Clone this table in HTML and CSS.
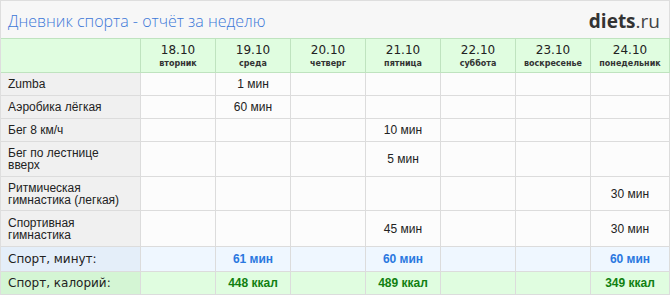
FILE: index.html
```html
<!DOCTYPE html>
<html lang="ru">
<head>
<meta charset="utf-8">
<title>Дневник спорта</title>
<link rel="stylesheet" href="styles.css">
</head>
<body>
<div class="report">
  <div class="topbar">
    <h1 class="title">Дневник спорта - отчёт за неделю</h1>
    <div class="logo"><b>diets</b>.ru</div>
  </div>
  <div class="grid">
    <div class="c hd first"></div>
    <div class="c hd"><span class="date">18.10</span><span class="wd">вторник</span></div>
    <div class="c hd"><span class="date">19.10</span><span class="wd">среда</span></div>
    <div class="c hd"><span class="date">20.10</span><span class="wd">четверг</span></div>
    <div class="c hd"><span class="date">21.10</span><span class="wd">пятница</span></div>
    <div class="c hd"><span class="date">22.10</span><span class="wd">суббота</span></div>
    <div class="c hd"><span class="date">23.10</span><span class="wd">воскресенье</span></div>
    <div class="c hd"><span class="date">24.10</span><span class="wd">понедельник</span></div>

    <div class="c lbl">Zumba</div>
    <div class="c v"></div><div class="c v">1 мин</div><div class="c v"></div><div class="c v"></div><div class="c v"></div><div class="c v"></div><div class="c v"></div>

    <div class="c lbl">Аэробика лёгкая</div>
    <div class="c v"></div><div class="c v">60 мин</div><div class="c v"></div><div class="c v"></div><div class="c v"></div><div class="c v"></div><div class="c v"></div>

    <div class="c lbl">Бег 8 км/ч</div>
    <div class="c v"></div><div class="c v"></div><div class="c v"></div><div class="c v">10 мин</div><div class="c v"></div><div class="c v"></div><div class="c v"></div>

    <div class="c lbl r35">Бег по лестнице вверх</div>
    <div class="c v"></div><div class="c v"></div><div class="c v"></div><div class="c v">5 мин</div><div class="c v"></div><div class="c v"></div><div class="c v"></div>

    <div class="c lbl r34">Ритмическая гимнастика (легкая)</div>
    <div class="c v"></div><div class="c v"></div><div class="c v"></div><div class="c v"></div><div class="c v"></div><div class="c v"></div><div class="c v">30 мин</div>

    <div class="c lbl r36">Спортивная гимнастика</div>
    <div class="c v"></div><div class="c v"></div><div class="c v"></div><div class="c v">45 мин</div><div class="c v"></div><div class="c v"></div><div class="c v">30 мин</div>

    <div class="c sum min first">Спорт, минут:</div>
    <div class="c sum min"></div><div class="c sum min">61 мин</div><div class="c sum min"></div><div class="c sum min">60 мин</div><div class="c sum min"></div><div class="c sum min"></div><div class="c sum min">60 мин</div>

    <div class="c sum kcal first">Спорт, калорий:</div>
    <div class="c sum kcal"></div><div class="c sum kcal">448 ккал</div><div class="c sum kcal"></div><div class="c sum kcal">489 ккал</div><div class="c sum kcal"></div><div class="c sum kcal"></div><div class="c sum kcal">349 ккал</div>
  </div>
</div>
</body>
</html>
```

FILE: styles.css
```css
html, body {
  margin: 0;
  padding: 0;
  background: #ffffff;
}

.report {
  width: 670px;
  box-sizing: border-box;
  border-top: 1px solid #dedede;
  border-left: 1px solid #dedede;
  font-family: "Liberation Sans", Arial, sans-serif;
  font-size: 12px;
  color: #222;
}

.topbar {
  height: 37px;
  box-sizing: border-box;
  display: flex;
  align-items: center;
  justify-content: space-between;
  padding: 0 9px 0 7px;
  background: #f7f7f7;
  border-right: 1px solid #dedede;
}

.title {
  margin: 0;
  font-family: "Open Sans", sans-serif;
  font-weight: 300;
  font-size: 16px;
  color: #3d78d8;
  padding-top: 2px;
}

.logo {
  font-family: "Open Sans", sans-serif;
  font-size: 19px;
  color: #444;
  padding-top: 2px;
}

.logo b {
  font-weight: 700;
  color: #333;
}

.grid {
  display: grid;
  grid-template-columns: 140px repeat(6, 75px) 79px;
}

.c {
  box-sizing: border-box;
  border-right: 1px solid #dcdcdc;
  border-bottom: 1px solid #dcdcdc;
  background: #fcfcfc;
  display: flex;
  align-items: center;
  justify-content: center;
  min-height: 23px;
}

.hd {
  height: 35px;
  border-top: 1px solid #bfe3bf;
  border-bottom: 1px solid #bfe3bf;
  border-right-color: #bfe3bf;
  background: #e0fde0;
  flex-direction: column;
  justify-content: center;
  gap: 1px;
  padding-top: 1px;
}

.date {
  font-family: "DejaVu Sans", sans-serif;
  font-size: 12px;
  line-height: 14px;
  color: #222;
}

.wd {
  font-family: "DejaVu Sans", sans-serif;
  font-size: 8px;
  font-weight: 700;
  line-height: 11px;
  color: #333;
}

.lbl {
  justify-content: flex-start;
  background: #f0f0f0;
  padding: 4px 16px 4px 7px;
  line-height: 12px;
  color: #222;
}

.r35 { min-height: 35px; }
.r34 { min-height: 34px; }
.r36 { min-height: 36px; }

.v {
  color: #222;
}

.sum {
  font-weight: 700;
}

.sum.first {
  justify-content: flex-start;
  padding-left: 7px;
  font-family: "DejaVu Sans", sans-serif;
  font-weight: 400;
  font-size: 12px;
  color: #222;
}

.min {
  min-height: 25px;
  background: #eff7ff;
  color: #2a78e0;
}

.min.first {
  background: #e4eef9;
}

.kcal {
  background: #e0fde0;
  color: #118011;
}

.kcal.first {
  background: #d4f5d4;
}
```
